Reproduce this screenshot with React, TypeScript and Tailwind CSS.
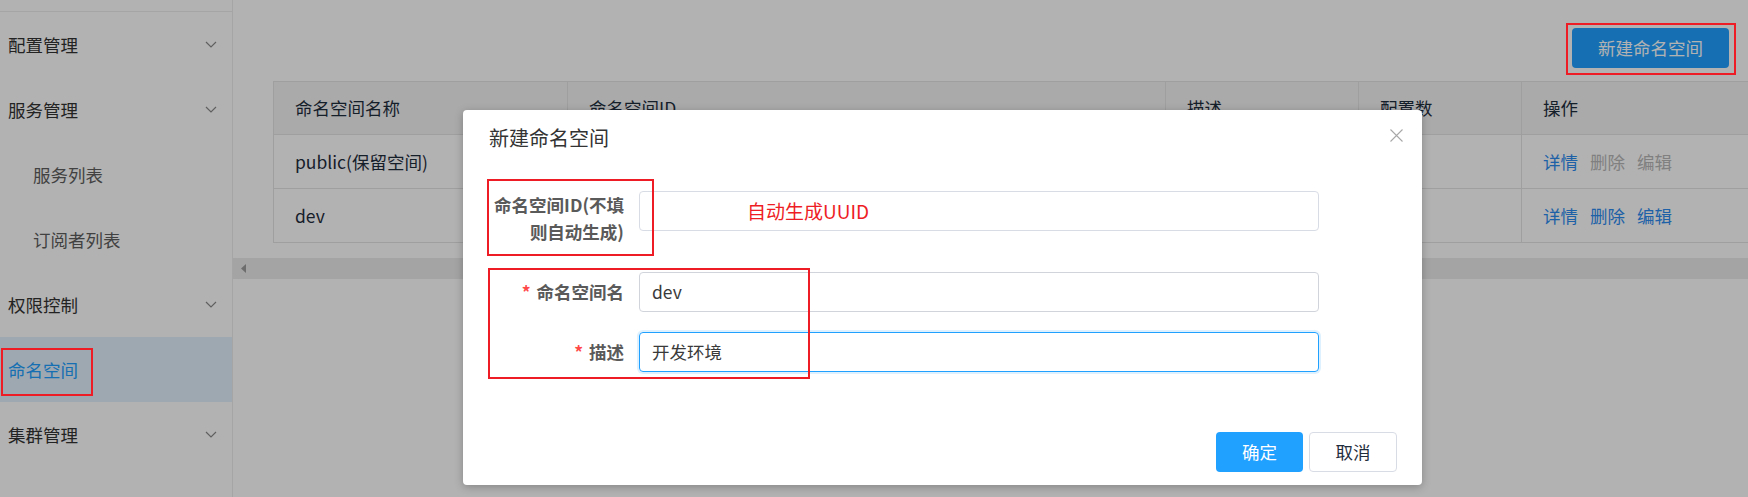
import React from 'react';

const font = "font-['Noto_Sans_CJK_SC','Noto_Sans',sans-serif]";

function Chevron() {
  return (
    <svg width="12" height="7" viewBox="0 0 12 7" fill="none">
      <path d="M1 1L6 6L11 1" stroke="#8a8a8a" strokeWidth="1.2" />
    </svg>
  );
}

function MenuItem({ label, sub, active, arrow }: { label: string; sub?: boolean; active?: boolean; arrow?: boolean }) {
  let cls = 'h-[65px] flex items-center justify-between pr-[15px] text-[17.5px] leading-[24px] ';
  if (active) cls += 'pl-[8px] bg-[#e3f1fd] text-[#20a0ff]';
  else if (sub) cls += 'pl-[33px] text-[#5e5e5e]';
  else cls += 'pl-[8px] text-[#333333]';
  return (
    <div className={cls}>
      <span>{label}</span>
      {arrow && <Chevron />}
    </div>
  );
}

const cols = 'grid grid-cols-[294px_598px_193px_163px_300px]';
const cell = 'flex items-center pl-[21px] border-r border-b border-[#e4e4e4]';

function Links({ disabled }: { disabled?: boolean }) {
  const off = disabled ? 'text-[#b8b8b8]' : 'text-[#2d8cf0]';
  return (
    <div className="flex gap-[12px]">
      <span className="text-[#2d8cf0]">详情</span>
      <span className={off}>删除</span>
      <span className={off}>编辑</span>
    </div>
  );
}

export default function App() {
  return (
    <div className={`relative w-[1748px] h-[497px] overflow-hidden bg-white flex ${font}`}>
      {/* sidebar */}
      <div className="w-[233px] shrink-0 border-r border-[#ececec]">
        <div className="h-[12px] border-b border-[#ececec]" />
        <MenuItem label="配置管理" arrow />
        <MenuItem label="服务管理" arrow />
        <MenuItem label="服务列表" sub />
        <MenuItem label="订阅者列表" sub />
        <MenuItem label="权限控制" arrow />
        <MenuItem label="命名空间" active />
        <MenuItem label="集群管理" arrow />
      </div>

      {/* main */}
      <div className="flex-1 min-w-0 overflow-hidden">
        <div className="flex justify-end pt-[28px] pr-[19px]">
          <button className="w-[157px] h-[40px] rounded-[4px] bg-[#20a0ff] text-white text-[17.5px] leading-[24px]">
            新建命名空间
          </button>
        </div>
        <div className="pl-[40px] mt-[13px]">
          <div className="w-max border-l border-t border-[#e4e4e4] text-[17.5px] leading-[24px] text-[#1f2d3d]">
            <div className={`${cols} h-[53px] bg-[#f4f4f4]`}>
              <div className={cell}>命名空间名称</div>
              <div className={cell}>命名空间ID</div>
              <div className={cell}>描述</div>
              <div className={cell}>配置数</div>
              <div className={cell}>操作</div>
            </div>
            <div className={`${cols} h-[54px]`}>
              <div className={cell}>public(保留空间)</div>
              <div className={cell}></div>
              <div className={cell}></div>
              <div className={cell}></div>
              <div className={cell}><Links disabled /></div>
            </div>
            <div className={`${cols} h-[54px]`}>
              <div className={cell}>dev</div>
              <div className={cell}></div>
              <div className={cell}></div>
              <div className={cell}></div>
              <div className={cell}><Links /></div>
            </div>
          </div>
        </div>
        <div className="mt-[15px] h-[21px] bg-[#ebebeb] flex items-center pl-[8px]">
          <svg width="6" height="9" viewBox="0 0 6 9">
            <path d="M5 0L0 4.5L5 9Z" fill="#9d9d9d" />
          </svg>
        </div>
      </div>

      {/* modal mask */}
      <div className="absolute inset-0 bg-[rgba(0,0,0,0.3)]" />

      {/* dialog */}
      <div className="absolute left-[463px] top-[110px] w-[959px] h-[375px] bg-white rounded-[4px] shadow-[0_2px_8px_rgba(0,0,0,0.25)]">
        <div className="flex justify-between items-start pt-[18px] pl-[26px] pr-[19px]">
          <span className="text-[20px] leading-[20px] text-[#333333]">新建命名空间</span>
          <svg width="13" height="13" viewBox="0 0 13 13" className="mt-[1px]">
            <path d="M0.5 0.5L12.5 12.5M12.5 0.5L0.5 12.5" stroke="#a8a8a8" strokeWidth="1.1" />
          </svg>
        </div>
        <div className="pt-[43px] pl-[25px] text-[17.5px]">
          <div className="flex h-[54px]">
            <div className="w-[151px] pr-[15px] text-right font-bold text-[#5a5a5a] leading-[27px]">
              命名空间ID(不填<br />则自动生成)
            </div>
            <div className="w-[680px] h-[40px] rounded-[4px] border border-[#d8dce5]" />
          </div>
          <div className="flex h-[40px] mt-[27px]">
            <div className="w-[151px] pr-[15px] flex items-center justify-end font-bold text-[#5a5a5a] leading-[24px]">
              <span className="text-[#ff4949] mr-[6px]">*</span>命名空间名
            </div>
            <div className="w-[680px] h-[40px] rounded-[4px] border border-[#d1d5db] flex items-center pl-[12px] text-[#3a3a3a] leading-[24px]">
              dev
            </div>
          </div>
          <div className="flex h-[40px] mt-[20px]">
            <div className="w-[151px] pr-[15px] flex items-center justify-end font-bold text-[#5a5a5a] leading-[24px]">
              <span className="text-[#ff4949] mr-[6px]">*</span>描述
            </div>
            <div className="w-[680px] h-[40px] rounded-[4px] border border-[#20a0ff] shadow-[0_0_0_2px_rgba(32,160,255,0.15)] flex items-center pl-[12px] text-[#3a3a3a] leading-[24px]">
              开发环境
            </div>
          </div>
        </div>
        <div className="flex justify-end gap-[6px] mt-[60px] pr-[25px] text-[17.5px] leading-[24px]">
          <button className="w-[87px] h-[40px] rounded-[4px] bg-[#20a0ff] text-white">确定</button>
          <button className="w-[88px] h-[40px] rounded-[4px] border border-[#d8dce5] bg-white text-[#1f2d3d]">取消</button>
        </div>
      </div>

      {/* annotations */}
      <div className="absolute left-[1px] top-[348px] w-[92px] h-[48px] border-2 border-[#ee1c25]" />
      <div className="absolute left-[1566px] top-[23px] w-[170px] h-[52px] border-2 border-[#ee1c25]" />
      <div className="absolute left-[487px] top-[179px] w-[167px] h-[77px] border-2 border-[#ee1c25]" />
      <div className="absolute left-[488px] top-[268px] w-[322px] h-[111px] border-2 border-[#ee1c25]" />
      <div className="absolute left-[747px] top-[199px] text-[19px] leading-[24px] text-[#ee1c25]">自动生成UUID</div>
    </div>
  );
}
